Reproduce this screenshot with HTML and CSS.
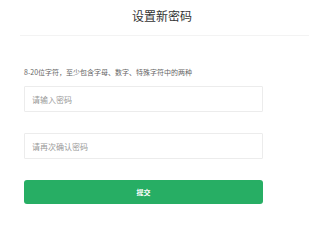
FILE: index.html
```html
<!DOCTYPE html>
<html lang="zh">
<head>
<meta charset="utf-8">
<link rel="stylesheet" href="styles.css">
</head>
<body>
<div class="header"><h1 class="title">设置新密码</h1></div>
<form class="form">
  <p class="hint">8-20位字符，至少包含字母、数字、特殊字符中的两种</p>
  <input class="field" type="password" placeholder="请输入密码">
  <input class="field field-second" type="password" placeholder="请再次确认密码">
  <button class="submit" type="button">提交</button>
</form>
</body>
</html>
```
FILE: styles.css
```css
html, body {
  margin: 0;
  padding: 0;
  background: #fff;
  font-family: "Noto Sans CJK SC", "Liberation Sans", sans-serif;
}
.header {
  margin: 0 11px 0 20px;
  height: 35px;
  border-bottom: 1px solid #f3f3f3;
  box-sizing: content-box;
  text-align: center;
  padding-right: 5px;
}
.title {
  margin: 0;
  padding-top: 9px;
  font-size: 12px;
  line-height: 13px;
  font-weight: normal;
  color: #333;
}
.form {
  margin: 0 0 0 24px;
  width: 239px;
  display: flex;
  flex-direction: column;
}
.hint {
  margin: 32px 0 0 0;
  font-size: 7px;
  line-height: 8px;
  color: #666;
  white-space: nowrap;
}
.field {
  margin: 10px 0 0 0;
  height: 26px;
  box-sizing: border-box;
  border: 1px solid #ececec;
  border-radius: 1px;
  padding: 0 0 0 7px;
  font-size: 8px;
  font-family: inherit;
  outline: none;
  background: #fff;
}
.field::placeholder {
  color: #999;
}
.field-second {
  margin-top: 21px;
}
.submit {
  margin-top: 21px;
  height: 24px;
  border: none;
  border-radius: 3px;
  background: #27ae64;
  color: #fff;
  font-family: inherit;
  font-size: 7px;
  font-weight: bold;
  padding: 0;
}
```
